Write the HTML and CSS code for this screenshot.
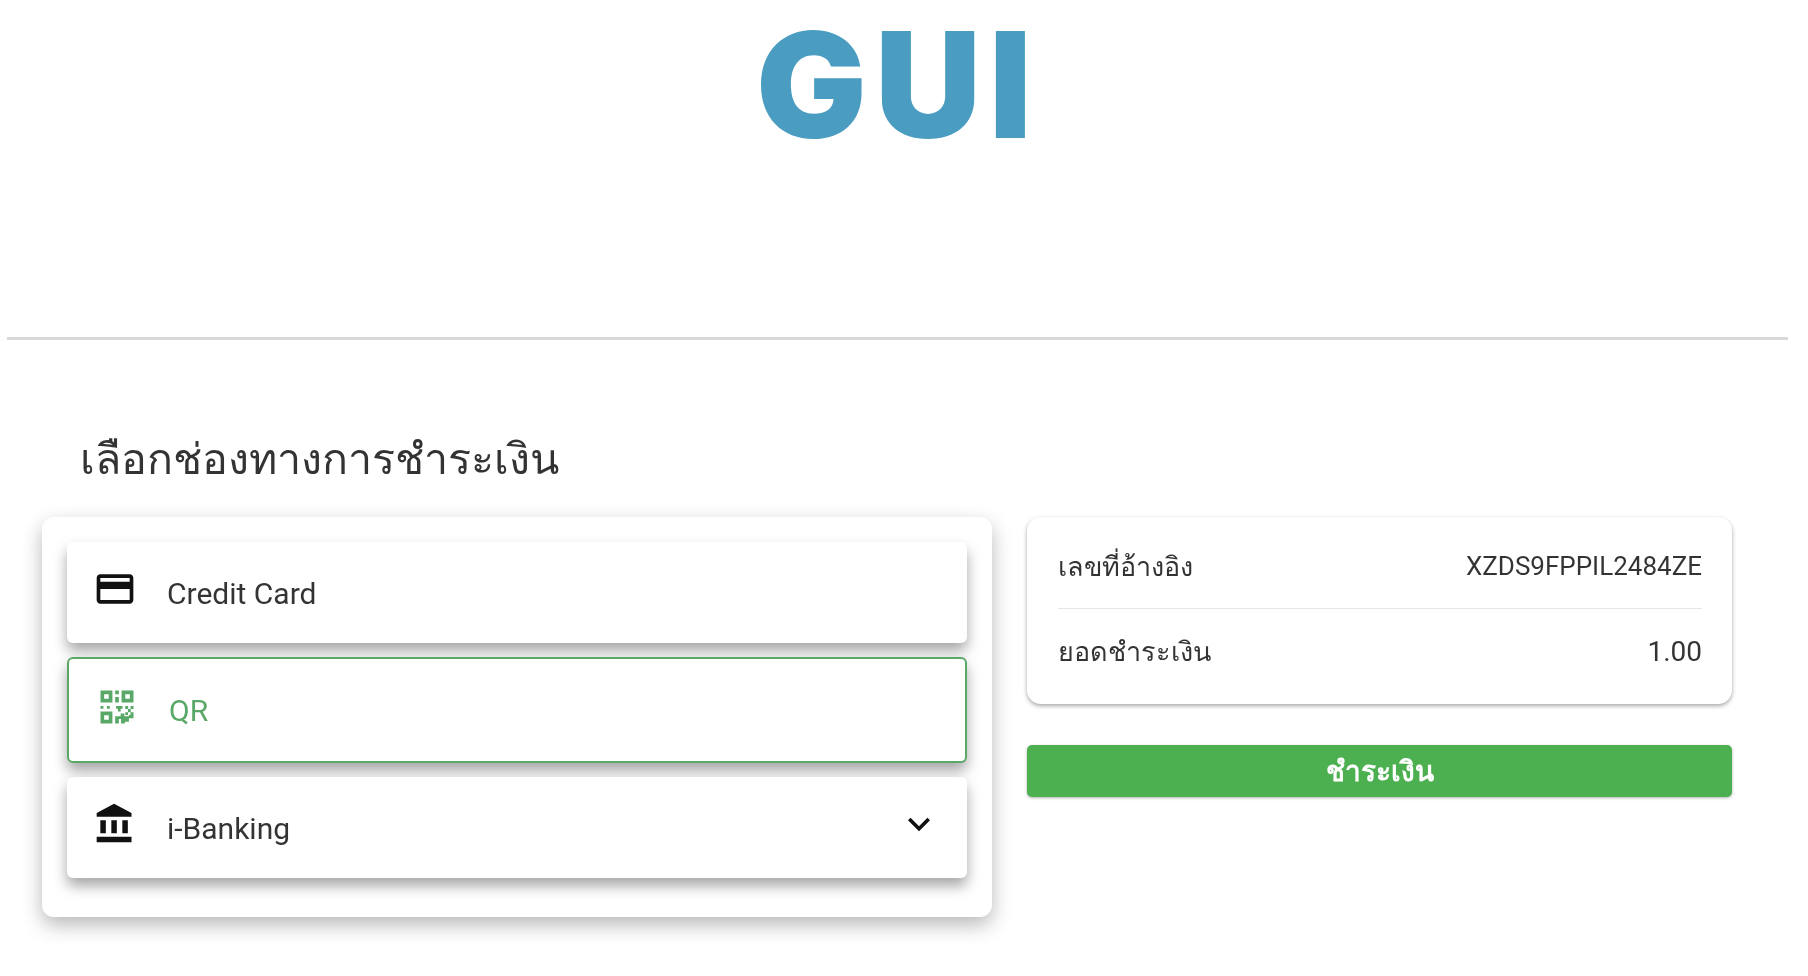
FILE: index.html
```html
<!DOCTYPE html>
<html lang="th">
<head>
    <meta charset="UTF-8">
    <meta name="viewport" content="width=device-width, initial-scale=1.0">
    <title>GUI - เลือกช่องทางการชำระเงิน</title>
    <link rel="stylesheet" href="styles.css">
</head>
<body>
    <header class="banner">
        <div class="banner-title">GUI</div>
    </header>
    <hr class="rule">

    <main class="page">
        <h1 class="page-title">เลือกช่องทางการชำระเงิน</h1>
        <div class="columns">
            <section class="methods">
                <div class="method">
                    <svg class="icon" viewBox="0 0 24 24"><path d="M20 4H4c-1.11 0-1.99.89-1.99 2L2 18c0 1.11.89 2 2 2h16c1.11 0 2-.89 2-2V6c0-1.11-.89-2-2-2zm0 14H4v-6h16v6zm0-10H4V6h16v2z"/></svg>
                    <span class="method-name">Credit Card</span>
                </div>
                <div class="method method-active">
                    <svg class="icon" viewBox="0 0 24 24"><path d="M3 3h6.500v6.500H3zM5 5v2.500h2.500V5zM14.500 3H21v6.500h-6.500zM16.500 5v2.500H19V5zM3 14.500h6.500V21H3zM5 16.500V19h2.500v-2.500zM11 3h2v2h-2zM11 6.500h2v3h-2zM3 11.500h1.600v1.400H3zM6.500 11.500h1.600v1.400H6.500zM11.500 11.500H15V13h-1v1.500h-1.500V13h-1zM16.500 11.500h1.600v1.600h-1.600zM19.400 11.500H21v1.600h-1.600zM18 13.100h1.500v1.700H18zM16.500 14.800H18v1.600h-1.500zM19.400 14.800H21v1.600h-1.600zM11 17h3v-1.500h2V17h2.500v-.6H21v1.800h-2.500V20h-2.200v1h-2.100v-2.500H13V21h-2z"/></svg>
                    <span class="method-name">QR</span>
                </div>
                <div class="method">
                    <svg class="icon" viewBox="0 0 24 24"><path d="M4 10v7h3v-7H4zm6 0v7h3v-7h-3zM2 22h19v-3H2v3zm14-12v7h3v-7h-3zm-4.500-9L2 6v2h19V6l-9.500-5z"/></svg>
                    <span class="method-name">i-Banking</span>
                    <svg class="icon" viewBox="0 0 24 24"><path d="M16.590 8.590L12 13.170 7.410 8.590 6 10l6 6 6-6z"/></svg>
                </div>
            </section>

            <aside class="summary">
                <div class="summary-card">
                    <div class="summary-row summary-row-first">
                        <span>เลขที่อ้างอิง</span>
                        <span class="ref-no">XZDS9FPPIL2484ZE</span>
                    </div>
                    <div class="summary-row summary-row-last">
                        <span>ยอดชำระเงิน</span>
                        <span class="amount">1.00</span>
                    </div>
                </div>
                <button class="pay-btn" type="button">ชำระเงิน</button>
            </aside>
        </div>
    </main>
</body>
</html>
```

FILE: styles.css
```css
* {
    box-sizing: border-box;
    margin: 0;
    padding: 0;
}
body {
    font-family: 'Roboto', 'Noto Sans', 'DejaVu Sans', sans-serif;
    background-color: #fff;
    color: rgba(0, 0, 0, 0.8);
}
.banner {
    height: 337px;
    padding: 5px 12px 0 0;
    text-align: center;
}
.banner-title {
    font-family: 'Inter', sans-serif;
    font-size: 147px;
    font-weight: 900;
    letter-spacing: 8px;
    line-height: 160px;
    color: #4a9dc1;
}
.rule {
    height: 3px;
    margin: 0 20px 0 7px;
    border: 0;
    background-color: #d9d9d9;
}
.page {
    padding: 96px 76px 60px 42px;
    filter: blur(0.5px);
}
.page-title {
    height: 81px;
    padding-left: 38px;
    font-size: 43px;
    font-weight: 400;
    line-height: 46px;
}
.columns {
    display: flex;
    align-items: flex-start;
    gap: 35px;
}
.methods {
    display: flex;
    flex-direction: column;
    gap: 14px;
    width: 950px;
    height: 400px;
    padding: 25px;
    border-radius: 12px;
    background-color: #fff;
    box-shadow: 0 8px 20px rgba(0, 0, 0, 0.28);
}
.method {
    display: flex;
    align-items: center;
    gap: 30px;
    height: 101px;
    padding: 0 26px;
    border-radius: 6px;
    background-color: #fff;
    box-shadow: 0 8px 14px rgba(0, 0, 0, 0.35);
}
.method-active {
    height: 106px;
    padding: 0 24px 0 26px;
    border: 2px solid #5aa867;
    color: #5aa867;
}
.method-name {
    flex: 1;
    padding-top: 2px;
    font-size: 30px;
    line-height: 34px;
}
.icon {
    flex: none;
    width: 44px;
    height: 44px;
    margin-bottom: 7px;
    fill: #111;
}
.method-active .icon {
    fill: #5aa867;
}
.summary {
    display: flex;
    flex-direction: column;
    gap: 41px;
    width: 705px;
}
.summary-card {
    height: 187px;
    padding: 0 30px 0 31px;
    border-radius: 14px;
    background-color: #fff;
    box-shadow: 0 2px 4px rgba(0, 0, 0, 0.35);
}
.summary-row {
    display: flex;
    align-items: center;
    justify-content: space-between;
    height: 92px;
    font-size: 27px;
}
.summary-row-first {
    padding-top: 7px;
    border-bottom: 1px solid #e6e6e6;
}
.summary-row-last {
    padding-bottom: 8px;
}
.ref-no {
    font-size: 26px;
}
.amount {
    font-size: 28px;
}
.pay-btn {
    height: 52px;
    border: 0;
    border-radius: 5px;
    font-family: inherit;
    font-size: 28px;
    font-weight: 700;
    color: #fff;
    background-color: #4caf50;
    box-shadow: 0 1px 3px rgba(0, 0, 0, 0.3);
}
```
